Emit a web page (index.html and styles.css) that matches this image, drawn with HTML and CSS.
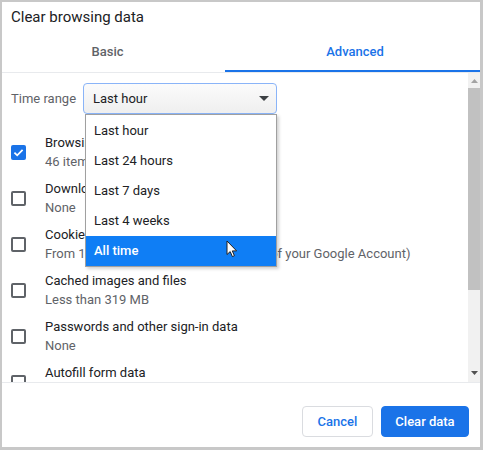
FILE: index.html
```html
<!DOCTYPE html>
<html>
<head>
<meta charset="utf-8">
<link rel="stylesheet" href="styles.css">
</head>
<body>
<div class="frame">
  <div class="dialog">
    <div class="title">Clear browsing data</div>
    <div class="tabs">
      <div class="tab tab-basic">Basic</div>
      <div class="tab tab-adv active">Advanced</div>
    </div>
    <div class="body">
      <div class="scroll">
        <div class="range-row">
          <span class="range-label">Time range</span>
          <div class="select-wrap">
            <div class="select">
              <span>Last hour</span>
              <svg class="caret" width="10" height="5" viewBox="0 0 10 5"><path d="M0 0H10L5 5Z" fill="#3c4043"/></svg>
            </div>
            <ul class="menu">
              <li>Last hour</li>
              <li>Last 24 hours</li>
              <li>Last 7 days</li>
              <li>Last 4 weeks</li>
              <li class="hl">All time</li>
              <svg class="cursor" width="12" height="18" viewBox="0 0 12 18"><path d="M1 1V14.5L4.2 11.6L6.4 16.6L8.4 15.7L6.3 10.9H10.6Z" fill="#fff" stroke="#222" stroke-width="1" stroke-linejoin="round"/></svg>
            </ul>
          </div>
        </div>
        <div class="opts">
          <div class="opt">
            <span class="cb checked"><svg width="15" height="15" viewBox="0 0 15 15"><path d="M3.4 7.6L6.2 10.3L11.6 4.8" fill="none" stroke="#fff" stroke-width="1.8"/></svg></span>
            <div class="txt"><div class="t">Browsing history</div><div class="s">46 items</div></div>
          </div>
          <div class="opt">
            <span class="cb"></span>
            <div class="txt"><div class="t">Download history</div><div class="s">None</div></div>
          </div>
          <div class="opt">
            <span class="cb"></span>
            <div class="txt"><div class="t">Cookies and other site data</div><div class="s">From 12 sites (you won't be signed out of your Google Account)</div></div>
          </div>
          <div class="opt">
            <span class="cb"></span>
            <div class="txt"><div class="t">Cached images and files</div><div class="s">Less than 319 MB</div></div>
          </div>
          <div class="opt">
            <span class="cb"></span>
            <div class="txt"><div class="t">Passwords and other sign-in data</div><div class="s">None</div></div>
          </div>
          <div class="opt">
            <span class="cb"></span>
            <div class="txt"><div class="t">Autofill form data</div><div class="s">None</div></div>
          </div>
        </div>
      </div>
      <div class="scrollbar">
        <div class="sb-btn"><svg width="7" height="4" viewBox="0 0 7 4"><path d="M0 4H7L3.5 0Z" fill="#a3a3a3"/></svg></div>
        <div class="sb-thumb"></div>
        <div class="sb-track"></div>
        <div class="sb-btn"><svg width="7" height="4" viewBox="0 0 7 4"><path d="M0 0H7L3.5 4Z" fill="#505050"/></svg></div>
      </div>
    </div>
    <div class="footer">
      <button class="btn btn-cancel">Cancel</button>
      <button class="btn btn-primary">Clear data</button>
    </div>
  </div>
</div>
</body>
</html>
```
FILE: styles.css
```css
* { box-sizing: border-box; }
html, body { margin: 0; padding: 0; }
body { font-family: Roboto, "Liberation Sans", sans-serif; background: #c8c8c8; }
.frame {
  width: 483px; height: 450px;
  border-style: solid; border-color: #c8c8c8;
  border-width: 2px 3px 3px 2px;
  background: #c8c8c8;
}
.dialog {
  width: 478px; height: 445px;
  background: #fff;
  display: flex; flex-direction: column;
}
.title {
  height: 28px;
  padding: 5px 0 0 9px;
  font-size: 15px; line-height: 20px;
  color: #202124;
}
.tabs {
  height: 43px;
  display: flex;
  border-bottom: 1px solid #e8eaed;
}
.tab {
  font-size: 13px; font-weight: 500;
  line-height: 40px; height: 42px;
  padding-top: 2px;
  text-align: center;
  color: #5f6368;
}
.tab-basic { width: 223px; padding-right: 12px; }
.tab-adv { flex: 1; padding-left: 5px; }
.tab.active { color: #1a73e8; border-bottom: 2px solid #1a73e8; }
.body {
  height: 309px;
  display: flex;
}
.scroll {
  flex: 1;
  overflow: hidden;
  padding: 10px 0 0 9px;
}
.range-row { display: flex; align-items: center; height: 31px; }
.range-label { width: 72px; flex: none; font-size: 13px; color: #5f6368; }
.select-wrap { position: relative; width: 194px; }
.select {
  height: 31px;
  border: 1px solid #8ab4f8;
  border-radius: 4px;
  background: linear-gradient(#fbfbfb, #efefef);
  display: flex; align-items: center; justify-content: space-between;
  padding: 0 7px 0 9px;
  font-size: 13px; color: #202124;
}
.caret { display: block; }
.menu {
  position: absolute; top: 31px; left: 2px;
  width: 192px;
  margin: 0; padding: 1px 0 0 0;
  list-style: none;
  background: #fff;
  border: 1px solid #a0a0a0;
  box-shadow: 2px 2px 3px rgba(0,0,0,0.18);
  z-index: 5;
}
.menu li {
  height: 30px; line-height: 30px;
  padding-left: 8px;
  font-size: 13px; color: #202124;
}
.menu li.hl { background: #0f7ef5; color: #fff; font-weight: 500; }
.cursor { position: absolute; left: 140px; top: 125px; }
.opts {
  margin-top: 19px;
  display: flex; flex-direction: column; gap: 8px;
}
.opt { display: flex; align-items: center; gap: 19px; }
.cb {
  width: 15px; height: 15px; flex: none;
  border: 2px solid #5f6368; border-radius: 2px;
}
.cb.checked { border: none; background: #1a73e8; }
.cb svg { display: block; }
.txt { font-size: 13px; line-height: 19px; white-space: nowrap; }
.t { color: #202124; }
.s { color: #5f6368; }
.scrollbar {
  width: 12px; flex: none;
  background: #f1f1f1;
  display: flex; flex-direction: column;
  padding-bottom: 2px;
}
.sb-btn { height: 15px; display: flex; align-items: center; justify-content: center; }
.sb-btn svg { display: block; }
.sb-thumb { height: 202px; background: #c1c1c1; }
.sb-track { flex: 1; }
.footer {
  height: 65px;
  border-top: 1px solid #e8eaed;
  display: flex; justify-content: flex-end; align-items: flex-start;
  gap: 8px;
  padding: 23px 11px 0 0;
}
.btn {
  height: 31px;
  border-radius: 4px;
  font-family: Roboto, "Liberation Sans", sans-serif;
  font-size: 13px; font-weight: 500;
  padding: 0;
  cursor: default;
}
.btn-cancel { width: 71px; background: #fff; border: 1px solid #dadce0; color: #1a73e8; }
.btn-primary { width: 88px; background: #1a73e8; border: 1px solid #1a73e8; color: #fff; }
```
